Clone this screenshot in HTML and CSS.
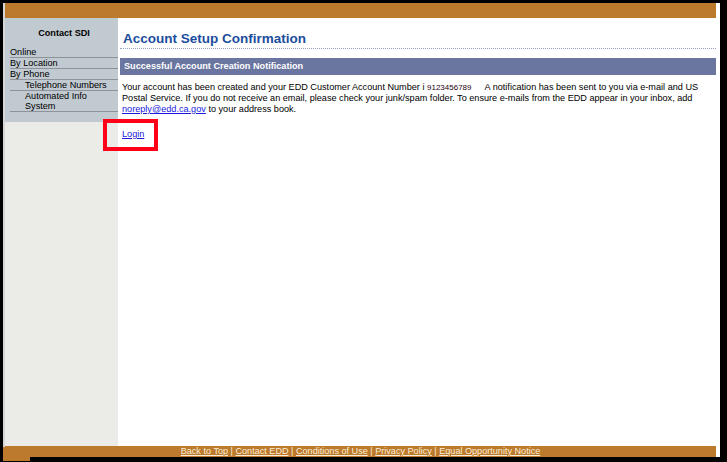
FILE: index.html
```html
<!DOCTYPE html>
<html lang="en">
<head>
  <meta charset="UTF-8" />
  <title>Account Setup Confirmation</title>
  <link rel="stylesheet" href="styles.css">
</head>
<body>
  <div class="window">
    <div class="page">
      <div class="topbar"></div>

      <div class="middle">
        <div class="sidebar">
          <div class="contact">
            <h3>Contact SDI</h3>
            <div class="nav-item">Online</div>
            <div class="nav-item">By Location</div>
            <div class="nav-item">By Phone</div>
            <div class="nav-item sub">Telephone Numbers</div>
            <div class="nav-item sub">Automated Info System</div>
          </div>
        </div>

        <div class="main">
          <h1 class="title">Account Setup Confirmation</h1>
          <div class="section-head">Successful Account Creation Notification</div>
          <p class="msg">Your account has been created and your EDD Customer Account Number i <span class="acct">9123456789</span>A notification has been sent to you via e-mail and US Postal Service. If you do not receive an email, please check your junk/spam folder. To ensure e-mails from the EDD appear in your inbox, add <a href="#">noreply@edd.ca.gov</a> to your address book.</p>
          <p class="login"><a href="#">Login</a></p>
        </div>
      </div>

      <div class="footer">
        <a href="#">Back to Top</a> | <a href="#">Contact EDD</a> | <a href="#">Conditions of Use</a> | <a href="#">Privacy Policy</a> | <a href="#">Equal Opportunity Notice</a>
      </div>
    </div>
    <div class="corner"></div>
  </div>
</body>
</html>
```

FILE: styles.css
```css
html, body { margin: 0; height: 100%; }
body { background: #000; font-family: "Liberation Sans", Arial, sans-serif; font-size: 9.15px; color: #000; overflow: hidden; }

.window { position: relative; box-sizing: border-box; height: 100%; padding: 3px 7px 5px 3px; }
.page { display: flex; flex-direction: column; height: 100%; background: #fff; border-left: 2px solid #d6d6d6; padding-right: 4px; }

.topbar { height: 15px; background: #bb7a2c; flex: none; }

.middle { flex: 1; display: flex; min-height: 0; }

.sidebar { width: 113px; flex: none; background: #ebebe8; }
.contact { background: #c1c9d1; height: 104px; box-sizing: border-box; padding: 10px 0 0 5px; }
.contact h3 { margin: 0 0 8px; text-align: center; font-size: 9.15px; line-height: 11px; }
.nav-item { line-height: 10px; border-bottom: 1px solid #8d9399; }
.nav-item.sub { padding-left: 15px; }

.main { flex: 1; padding: 0 0 0 2px; }
.title { margin: 13px 0 0; padding: 0 0 2px 3px; font-size: 13.5px; line-height: 15px; color: #1c4d9c; border-bottom: 1px dotted #98a2c6; }
.section-head { margin-top: 9px; height: 17px; line-height: 17px; padding-left: 4px; background: #6a76a0; color: #fff; font-weight: bold; }
.msg { margin: 7px 0 0 2px; line-height: 11px; padding-right: 10px; }
.msg a, .login a { color: #1a1adc; }
.acct { font-size: 8px; color: #2a0010; margin-right: 13px; }

.login { position: relative; margin: 14px 0 0 2px; line-height: 11px; }
.login::after { content: ""; position: absolute; left: -19px; top: -10px; width: 47px; height: 24px; border: 4px solid #ff0018; }

.footer { height: 11px; flex: none; background: #bb7a2c; color: #fbeed6; text-align: center; line-height: 11px; font-size: 9.1px; }
.footer a { color: #fbeed6; }

.corner { position: absolute; left: 3px; bottom: 1px; width: 27px; height: 14px; background: #bb7a2c; }
```
